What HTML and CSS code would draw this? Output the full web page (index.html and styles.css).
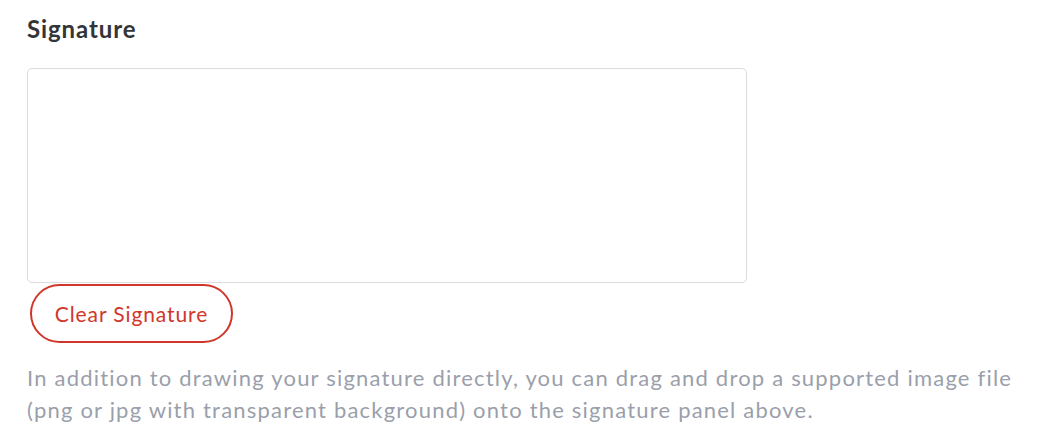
FILE: index.html
```html
<!DOCTYPE html>
<html>
<head>
<meta charset="utf-8">
<link rel="stylesheet" href="styles.css">
</head>
<body>
<div class="field">
  <h2 class="title">Signature</h2>
  <div class="pad"></div>
  <button class="clear-btn">Clear Signature</button>
  <p class="help">In addition to drawing your signature directly, you can drag and drop a supported image file (png or jpg with transparent background) onto the signature panel above.</p>
</div>
</body>
</html>
```

FILE: styles.css
```css
html, body {
  margin: 0;
  padding: 0;
  background: #ffffff;
}
body {
  font-family: "Lato", "Noto Sans", sans-serif;
}
.field {
  padding: 13px 0 0 27px;
  width: 1000px;
  display: flex;
  flex-direction: column;
  align-items: flex-start;
}
.title {
  margin: 0;
  font-size: 24px;
  font-weight: 700;
  line-height: 32px;
  color: #333538;
  letter-spacing: 0.9px;
}
.pad {
  margin-top: 23px;
  width: 718px;
  height: 213px;
  border: 1px solid #dcdcdf;
  border-radius: 5px;
  background: #fff;
}
.clear-btn {
  margin: 1px 0 0 3px;
  height: 59px;
  width: 203px;
  border: 2px solid #d0372a;
  border-radius: 30px;
  background: #fff;
  color: #d0372a;
  font-family: "Lato", "Noto Sans", sans-serif;
  font-size: 21px;
  padding: 0;
  letter-spacing: 0.9px;
}
.help {
  margin: 19px 0 0 0;
  font-size: 22px;
  line-height: 32px;
  color: #9a9fab;
  letter-spacing: 1.2px;
}
```
